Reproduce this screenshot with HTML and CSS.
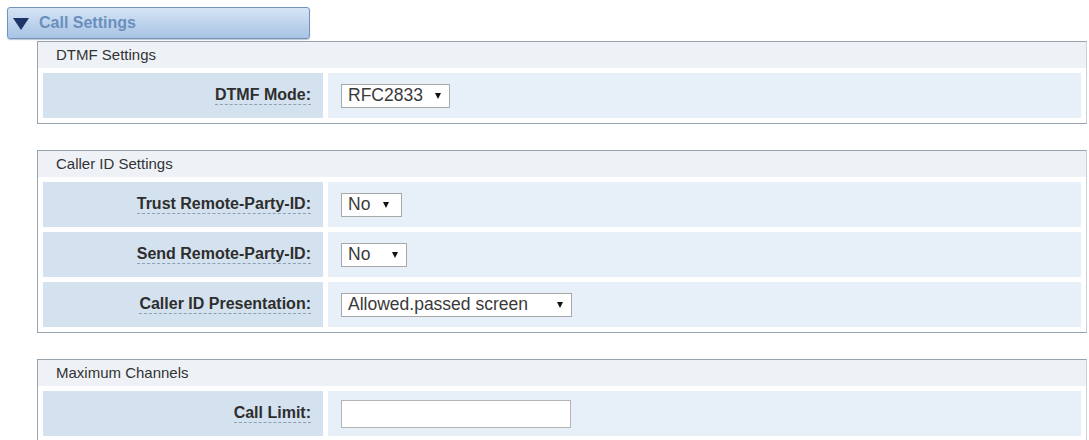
FILE: index.html
```html
<!DOCTYPE html>
<html lang="en">
<head>
<meta charset="utf-8">
<title>Call Settings</title>
<link rel="stylesheet" href="styles.css">
</head>
<body>
<div class="page">
  <div class="section-head">
    <svg class="section-arrow" width="16" height="12" viewBox="0 0 16 12"><path d="M0 0 H16 L8 12 Z" fill="#1b3567"/></svg>
    <span class="section-title">Call Settings</span>
  </div>

  <div class="group">
    <div class="group-title">DTMF Settings</div>
    <div class="rows">
      <div class="label-cell"><span class="label">DTMF Mode:</span></div>
      <div class="value-cell"><span class="select w-rfc">RFC2833<span class="caret"></span></span></div>
    </div>
  </div>

  <div class="group">
    <div class="group-title">Caller ID Settings</div>
    <div class="rows">
      <div class="label-cell"><span class="label">Trust Remote-Party-ID:</span></div>
      <div class="value-cell"><span class="select w-no1">No<span class="caret"></span></span></div>
      <div class="label-cell"><span class="label">Send Remote-Party-ID:</span></div>
      <div class="value-cell"><span class="select w-no2">No<span class="caret"></span></span></div>
      <div class="label-cell"><span class="label">Caller ID Presentation:</span></div>
      <div class="value-cell"><span class="select w-pres">Allowed.passed screen<span class="caret"></span></span></div>
    </div>
  </div>

  <div class="group">
    <div class="group-title">Maximum Channels</div>
    <div class="rows">
      <div class="label-cell"><span class="label">Call Limit:</span></div>
      <div class="value-cell"><span class="text-input"></span></div>
    </div>
  </div>
</div>
</body>
</html>
```

FILE: styles.css
```css
html, body {
  margin: 0;
  padding: 0;
  background: #ffffff;
  overflow: hidden;
}

.page {
  padding-top: 7px;
  font-family: "Liberation Sans", Arial, sans-serif;
  color: #333333;
}

.section-head {
  margin-left: 7px;
  width: 296px;
  height: 30px;
  border: 1px solid #7393bd;
  border-radius: 3px;
  background: linear-gradient(#d6e4f5, #bcd2ec 55%, #a8c3e4);
  box-shadow: 0 1px 1px rgba(60, 90, 130, 0.35);
  display: flex;
  align-items: center;
  gap: 10px;
  padding-left: 5px;
  box-sizing: content-box;
}

.section-arrow {
  display: block;
  margin-top: 1px;
}

.section-title {
  font-size: 16px;
  font-weight: bold;
  color: #6a8fbd;
}

.group {
  margin: 2px 2px 26px 37px;
  border: 1px solid #98a3ae;
  border-right-color: #c9d0d8;
}

.group-title {
  height: 26px;
  line-height: 26px;
  padding-left: 18px;
  font-size: 15px;
  color: #333333;
  background: #eef2f7;
}

.rows {
  display: grid;
  grid-template-columns: 280px 1fr;
  gap: 5px;
  padding: 5px;
  grid-auto-rows: 45px;
}

.label-cell {
  background: #d4e2ef;
  display: flex;
  align-items: center;
  justify-content: flex-end;
  padding-right: 12px;
}

.label {
  font-size: 16px;
  font-weight: bold;
  color: #2e2e2e;
  border-bottom: 1px dashed #8e9fb3;
  line-height: 17px;
  padding-bottom: 1px;
}

.value-cell {
  background: #e7eff8;
  display: flex;
  align-items: center;
  padding-left: 13px;
}

.select {
  height: 24px;
  box-sizing: border-box;
  border: 1px solid #a8a8a8;
  background: #ffffff;
  display: flex;
  align-items: center;
  justify-content: space-between;
  padding: 0 8px 0 6px;
  font-size: 17.5px;
  color: #3a3a3a;
}

.caret {
  width: 0;
  height: 0;
  border-left: 3.5px solid transparent;
  border-right: 3.5px solid transparent;
  border-top: 6px solid #111111;
}

.w-rfc { width: 109px; }
.w-no1 { width: 61px; padding-right: 12px; }
.w-no2 { width: 66px; }
.w-pres { width: 231px; }

.text-input {
  display: block;
  width: 230px;
  height: 28px;
  box-sizing: border-box;
  border: 1px solid #b4b4b4;
  background: #ffffff;
}
```
